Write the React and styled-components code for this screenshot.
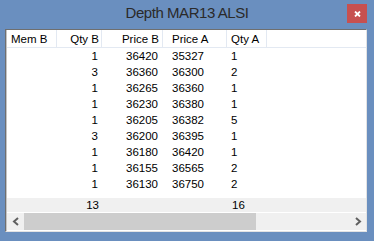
import React from "react";
import styled, { createGlobalStyle } from "styled-components";

const bids = [
  { qty: 1, price: 36420 },
  { qty: 3, price: 36360 },
  { qty: 1, price: 36265 },
  { qty: 1, price: 36230 },
  { qty: 1, price: 36205 },
  { qty: 3, price: 36200 },
  { qty: 1, price: 36180 },
  { qty: 1, price: 36155 },
  { qty: 1, price: 36130 },
];

const asks = [
  { qty: 1, price: 35327 },
  { qty: 2, price: 36300 },
  { qty: 1, price: 36360 },
  { qty: 1, price: 36380 },
  { qty: 5, price: 36382 },
  { qty: 1, price: 36395 },
  { qty: 1, price: 36420 },
  { qty: 2, price: 36565 },
  { qty: 2, price: 36750 },
];

const GlobalStyle = createGlobalStyle`
  html, body {
    margin: 0;
    padding: 0;
    background: #6a8fbf;
  }
`;

const DepthWindow = () => {
  const totalBid = bids.reduce((s, b) => s + b.qty, 0);
  const totalAsk = asks.reduce((s, a) => s + a.qty, 0);

  return (
    <>
      <GlobalStyle />
      <Frame>
        <TitleBar>
          <span />
          <Title>Depth MAR13 ALSI</Title>
          <CloseButton>
            <svg width="7" height="6" viewBox="0 0 7 6">
              <path d="M1 0.5 L6 5.5 M6 0.5 L1 5.5" stroke="#fff" strokeWidth="1.8" />
            </svg>
          </CloseButton>
        </TitleBar>
        <Client>
          <Inner>
            <HeaderRow>
              <HeadCell $pad="0 0 0 4px">Mem B</HeadCell>
              <HeadCell $align="right" $pad="0 2px 0 0">Qty B</HeadCell>
              <HeadCell $align="right" $pad="0 3px 0 0">Price B</HeadCell>
              <HeadCell $pad="0 0 0 9px">Price A</HeadCell>
              <HeadCell $pad="0 0 0 4px">Qty A</HeadCell>
              <Filler />
            </HeaderRow>
            {bids.map((b, i) => (
              <DataRow key={i}>
                <Cell $pad="0 0 0 4px" />
                <Cell $align="right" $pad="0 4px 0 0">{b.qty}</Cell>
                <Cell $align="right" $pad="0 5px 0 0">{b.price}</Cell>
                <Cell $pad="0 0 0 9px">{asks[i].price}</Cell>
                <Cell $pad="0 0 0 4px">{asks[i].qty}</Cell>
                <span />
              </DataRow>
            ))}
            <Spacer />
            <TotalsRow>
              <Cell />
              <Cell $align="right" $pad="0 3px 0 0">{totalBid}</Cell>
              <Cell />
              <Cell />
              <Cell $pad="0 0 0 5px">{totalAsk}</Cell>
              <span />
            </TotalsRow>
            <ScrollBar>
              <ArrowButton>
                <svg width="8" height="9" viewBox="0 0 8 9">
                  <polyline points="6,1 2,4.5 6,8" fill="none" stroke="#606060" strokeWidth="2" />
                </svg>
              </ArrowButton>
              <Track>
                <Thumb />
              </Track>
              <ArrowButton>
                <svg width="8" height="9" viewBox="0 0 8 9">
                  <polyline points="2,1 6,4.5 2,8" fill="none" stroke="#606060" strokeWidth="2" />
                </svg>
              </ArrowButton>
            </ScrollBar>
          </Inner>
        </Client>
      </Frame>
    </>
  );
};

const Frame = styled.div`
  width: 374px;
  height: 241px;
  background: #6a8fbf;
  display: flex;
  flex-direction: column;
  font-family: "Liberation Sans", Arial, sans-serif;
`;

const TitleBar = styled.div`
  height: 29px;
  display: grid;
  grid-template-columns: 1fr auto 1fr;
  align-items: start;
`;

const Title = styled.div`
  padding-top: 4px;
  font-size: 15px;
  line-height: 18px;
  letter-spacing: -0.45px;
  color: #2a2a2a;
  white-space: nowrap;
`;

const CloseButton = styled.div`
  justify-self: end;
  margin: 4px 7px 0 0;
  width: 20px;
  height: 19px;
  background: #c75050;
  display: flex;
  align-items: center;
  justify-content: center;
`;

const Client = styled.div`
  flex: 1;
  margin: 0 7px 9px 5px;
  border-style: solid;
  border-width: 1px;
  border-color: #6f6f6f #e3e3e3 #e3e3e3 #6f6f6f;
  background: #fff;
  display: flex;
`;

const Inner = styled.div`
  flex: 1;
  border-left: 1px solid #c4c4c4;
  display: flex;
  flex-direction: column;
  font-size: 11.5px;
  color: #000;
`;

const Row = styled.div`
  display: grid;
  grid-template-columns: 50px 45px 61px 64px 40px 1fr;
  align-items: stretch;
`;

const HeaderRow = styled(Row)`
  height: 17px;
  border-bottom: 1px solid #e3e9f2;
`;

const DataRow = styled(Row)`
  height: 16px;
`;

const TotalsRow = styled(Row)`
  height: 14px;
  background: #f0f0f0;
  border-bottom: 1px solid #fff;
`;

const Cell = styled.div`
  display: flex;
  align-items: center;
  justify-content: ${(p) => (p.$align === "right" ? "flex-end" : "flex-start")};
  padding: ${(p) => p.$pad || "0"};
  white-space: nowrap;
`;

const HeadCell = styled(Cell)`
  border-right: 1px solid #e3e9f2;
`;

const Filler = styled.div``;

const Spacer = styled.div`
  flex: 1;
`;

const ScrollBar = styled.div`
  height: 17px;
  margin-bottom: 1px;
  display: flex;
  background: #f0f0f0;
`;

const ArrowButton = styled.div`
  width: 17px;
  display: flex;
  align-items: center;
  justify-content: center;
`;

const Track = styled.div`
  flex: 1;
  display: flex;
`;

const Thumb = styled.div`
  width: 232px;
  background: #cdcdcd;
`;

export default DepthWindow;
